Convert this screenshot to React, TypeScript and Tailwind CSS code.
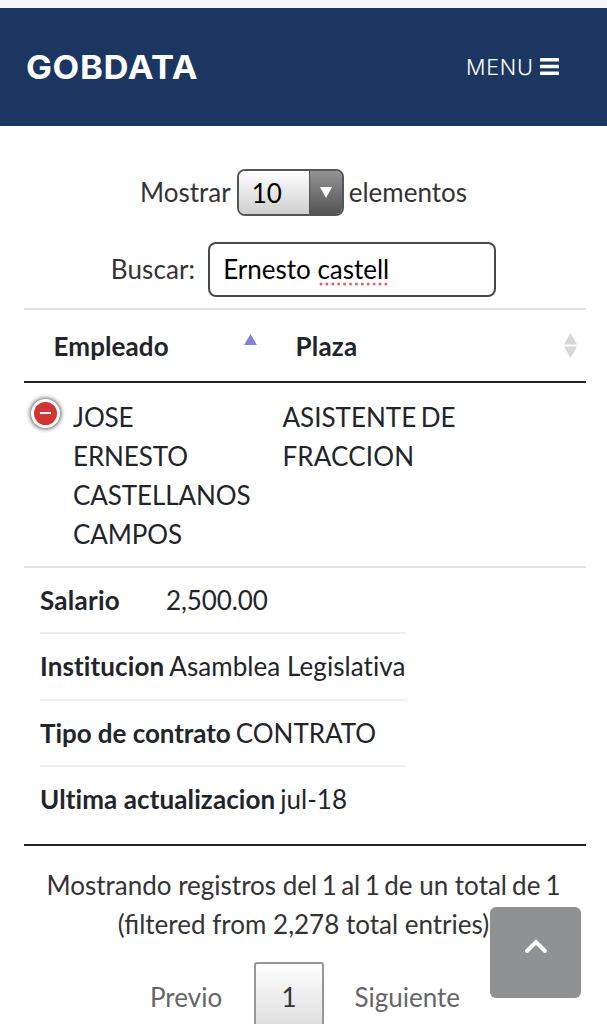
import React from "react";

interface DetailRowProps {
  title: string;
  value: string;
  titleClass?: string;
  valueClass?: string;
  last?: boolean;
}

const details: DetailRowProps[] = [
  { title: "Salario", value: "2,500.00", titleClass: "w-[126px] tracking-[0.25px]", valueClass: "tracking-[-0.1px]" },
  { title: "Institucion", value: "Asamblea Legislativa", titleClass: "pr-[5px] tracking-[0.12px]", valueClass: "tracking-[0.07px]" },
  { title: "Tipo de contrato", value: "CONTRATO", titleClass: "pr-[5px] tracking-[-0.05px]" },
  { title: "Ultima actualizacion", value: "jul-18", titleClass: "pr-[5px] tracking-[0.1px]", last: true },
];

const DetailRow: React.FC<DetailRowProps> = ({ title, value, titleClass = "", valueClass = "", last }) => (
  <li
    className={`flex items-center whitespace-nowrap [font-variant-ligatures:none] ${
      last ? "h-[65px]" : "h-[66.5px] border-b-2 border-[#efefef] pt-px"
    }`}
  >
    <span className={`shrink-0 font-bold ${titleClass}`}>{title}</span>
    <span className={valueClass}>{value}</span>
  </li>
);

const Header: React.FC = () => (
  <header className="mt-2 flex h-[117.5px] shrink-0 items-center justify-between bg-[#1a3661] pr-[48px] pl-[26px] font-['Inter'] text-white">
    <a className="mt-[2px] origin-left scale-x-[1.065] text-[32.5px] font-bold tracking-[0.6px]">GOBDATA</a>
    <button className="flex items-center gap-[6px]">
      <span className="mt-[2px] origin-right scale-x-[1.03] text-[21px] font-light tracking-[0.7px]">MENU</span>
      <svg width="19" height="17" viewBox="0 0 19 17" fill="currentColor">
        <rect width="19" height="3.6" rx="0.6" />
        <rect y="6.7" width="19" height="3.6" rx="0.6" />
        <rect y="13.4" width="19" height="3.6" rx="0.6" />
      </svg>
    </button>
  </header>
);

const Filters: React.FC = () => (
  <div className="text-[#333333]">
    <div className="mt-[43.5px] flex h-[47px] items-center justify-center">
      <span>Mostrar</span>
      <button className="mr-[5px] ml-[6px] flex h-[47px] w-[107px] overflow-hidden rounded-[8px] border-2 border-[#555555] text-black">
        <span className="flex h-full flex-1 items-center bg-linear-to-b from-white to-[#cfcfcf] pt-px pl-[13px]">10</span>
        <span className="flex h-full w-[33px] justify-center border-l border-[#555555] bg-linear-to-b from-[#939393] to-[#555555] pt-[16px]">
          <svg width="12" height="11" viewBox="0 0 12 11" fill="white">
            <path d="M0 0h12L6 11z" />
          </svg>
        </span>
      </button>
      <span>elementos</span>
    </div>
    <div className="mt-[26px] flex h-[55px] items-center justify-center">
      <span className="-mt-px tracking-[0.1px]">Buscar:</span>
      <div className="ml-[13px] flex h-[55px] w-[288px] items-center rounded-[8px] border-2 border-[#4a4a4a] bg-white pl-[13px] text-black">
        <span className="-mt-px whitespace-pre">Ernesto </span>
        <span className="relative -mt-px">
          castell
          <svg className="absolute top-[32px] left-[2px]" width="70" height="4" viewBox="0 0 70 4">
            <path d="M2 2h67" stroke="#ef5a68" strokeWidth="3" strokeLinecap="round" strokeDasharray="0 5.9" />
          </svg>
        </span>
      </div>
    </div>
  </div>
);

const Table: React.FC = () => (
  <section className="mx-[24px] mt-[11px] w-[562px] border-t-2 border-[#dee2e6]">
    <div className="flex h-[73px] border-b-2 border-[#212529] font-bold">
      <div className="flex w-[242px] items-center justify-between pr-[9px] pl-[29.5px]">
        <span className="mt-px tracking-[0.1px]">Empleado</span>
        <svg className="-mt-[13px]" width="13" height="11" viewBox="0 0 13 11" fill="#8080e0">
          <path d="M6.5 0 13 11H0z" />
        </svg>
      </div>
      <div className="flex flex-1 items-center justify-between pr-[9px] pl-[29.5px]">
        <span className="mt-px tracking-[0.2px]">Plaza</span>
        <svg width="13" height="25" viewBox="0 0 13 25" fill="#d6d6d6">
          <path d="M6.5 0 13 11.5H0zM0 13.5h13L6.5 25z" />
        </svg>
      </div>
    </div>
    <div className="flex h-[184.5px] border-b-2 border-[#dee2e6] pt-[15px]">
      <div className="flex w-[258px]">
        <span className="mt-[1px] ml-[7px] flex h-[29px] w-[29px] items-center justify-center rounded-full border-[3px] border-white bg-[#d33333] shadow-[0_0_4px_1px_#5c5c5c]">
          <span className="-mt-px h-[2px] w-[11px] bg-white" />
        </span>
        <p className="ml-[13px] w-[190px] tracking-[-0.1px]">
          JOSE
          <br />
          ERNESTO
          <br />
          CASTELLANOS
          <br />
          CAMPOS
        </p>
      </div>
      <p className="pl-[0.5px]">
        <span className="[word-spacing:-2px]">ASISTENTE DE</span>
        <br />
        <span className="tracking-[0.15px]">FRACCION</span>
      </p>
    </div>
    <ul className="ml-[16px] w-[366px]">
      {details.map((row) => (
        <DetailRow key={row.title} {...row} />
      ))}
    </ul>
    <div className="mt-[12px] border-b-2 border-[#212529]" />
  </section>
);

const Footer: React.FC = () => (
  <footer className="text-center text-[#333333]">
    <p className="mt-[19.5px]">
      Mostrando registros <span className="[word-spacing:-2.2px]">del 1 al 1 de</span> un total
      <span className="[word-spacing:-1.6px]"> de 1</span>
      <br />
      (filtered from 2,278 total entries)
    </p>
    <div className="mt-[18px] flex justify-center pl-[3px] text-[#666666]">
      <span className="flex h-[70px] w-[104px] items-center pt-px">Previo</span>
      <span className="flex h-[70px] w-[70px] items-center justify-center rounded-[3px] border-2 border-[#979797] bg-linear-to-b from-white to-[#dcdcdc] pt-px text-[#333333]">
        1
      </span>
      <span className="flex h-[70px] w-[136px] items-center justify-end pt-px">Siguiente</span>
    </div>
  </footer>
);

const App: React.FC = () => (
  <div className="h-screen overflow-hidden bg-[#f6f6f8] font-['Lato',sans-serif] text-[26px] leading-[39px] text-[#212529]">
    <div className="flex h-full flex-col">
      <Header />
      <main className="flex-1 bg-white">
        <Filters />
        <Table />
        <Footer />
      </main>
    </div>
    <button className="fixed top-[907px] left-[490px] flex h-[91px] w-[91px] justify-center rounded-[6px] bg-[#909193] pt-[32px]">
      <svg width="24" height="15" viewBox="0 0 24 15" fill="none" stroke="white" strokeWidth="4" strokeLinecap="round">
        <path d="m3 12 9-9 9 9" />
      </svg>
    </button>
  </div>
);

export default App;
